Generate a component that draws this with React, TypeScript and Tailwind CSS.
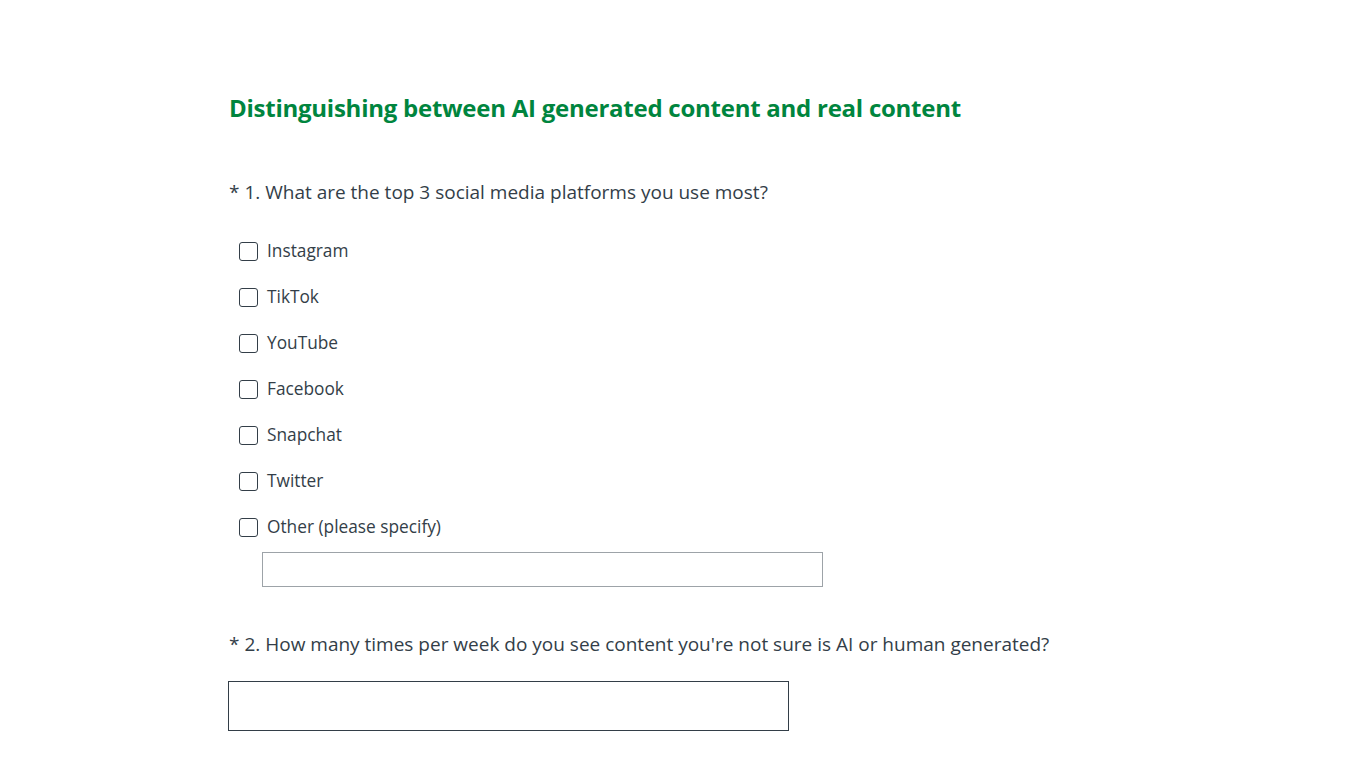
import { useState } from 'react';

const options = ['Instagram', 'TikTok', 'YouTube', 'Facebook', 'Snapchat', 'Twitter', 'Other (please specify)'];

export default function App() {
    const [checked, setChecked] = useState<Record<string, boolean>>({});

    return (
        <div className="min-h-[760px] w-full bg-white font-['Open_Sans',sans-serif] text-[#333e48]">
            <div className="ml-[228px] pt-[90px]">
                <h1 className="ml-[1px] text-[24px] font-bold leading-[36px] tracking-[-0.25px] text-[#00853e]">
                    Distinguishing between AI generated content and real content
                </h1>

                {/* Question 1 */}
                <div className="mt-[51px]">
                    <p className="ml-[1px] text-[19px] leading-[30px]">* 1. What are the top 3 social media platforms you use most?</p>
                    <div className="mt-[34px] ml-[11px] flex flex-col gap-[26px]">
                        {options.map((opt) => (
                            <label key={opt} className="flex h-[20px] cursor-pointer items-center gap-[9px]">
                                <span
                                    onClick={() => setChecked({ ...checked, [opt]: !checked[opt] })}
                                    className="h-[19px] w-[19px] rounded-[3px] border border-[#333e48] bg-white"
                                />
                                <span className="text-[17.3px] text-[#333e48]">{opt}</span>
                            </label>
                        ))}
                    </div>
                    <input className="mt-[15px] ml-[34px] block h-[35px] w-[561px] border border-[#9da3a8] outline-none" />
                </div>

                {/* Question 2 */}
                <div className="mt-[42px]">
                    <p className="ml-[1px] text-[19px] leading-[30px]">* 2. How many times per week do you see content you're not sure is AI or human generated?</p>
                    <input className="mt-[22px] block h-[50px] w-[561px] border border-[#333e48] outline-none" />
                </div>
            </div>
        </div>
    );
}
